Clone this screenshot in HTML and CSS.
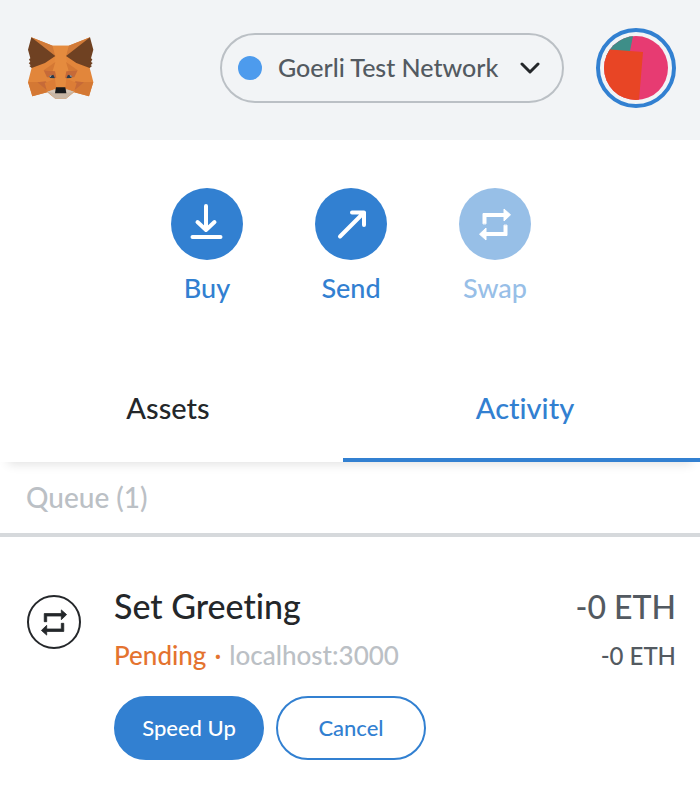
FILE: index.html
```html
<!DOCTYPE html>
<html lang="en">
<head>
<meta charset="utf-8">
<meta name="viewport" content="width=device-width, initial-scale=1">
<title>MetaMask</title>
<link rel="stylesheet" href="styles.css">
</head>
<body>
<svg class="defs" aria-hidden="true">
  <symbol id="swap" viewBox="0 0 32 33">
    <g fill="currentColor" stroke="currentColor" stroke-width="1" stroke-linejoin="round">
      <path d="M4 15.500V5.500H25V1L31.500 6.800L25 13V8.500H7V15.500Z"/>
      <path d="M28 17.500V27.500H7V32L.5 26.200L7 20V24.500H25V17.500Z"/>
    </g>
  </symbol>
</svg>
<header class="topbar">
  <svg class="fox" viewBox="54 50 198 186" role="img" aria-label="MetaMask">
    <path fill="#e2863b" d="M64 51L128 76H176L240 51L239 142L250 185L237 228L192 216L168 235H136L112 216L67 228L54 185L65 142Z"/>
    <path fill="#d17a38" d="M64 51L128 76L136 107ZM240 51L176 76L168 107Z"/>
    <path fill="#e58b3e" d="M128 76H176L168 107L176 151L169 200H135L128 151L136 107Z"/>
    <path fill="#6f4122" d="M64 51L136 107L105 128L65 143L58 137L62 135L56 128L61 125L57 117L61 114L54 88ZM240 51L168 107L199 128L239 143L246 137L242 135L248 128L243 125L247 117L243 114L250 88Z"/>
    <path fill="#d47834" d="M54 185H82L104 188L111 216L67 228ZM250 185H222L200 188L193 216L237 228ZM136 125L101 150L128 151ZM168 125L203 150L176 151Z"/>
    <path fill="#c66a38" d="M101 150L135 153L139 173L111 171ZM203 150L169 153L165 173L193 171ZM82 186L107 183L118 194L111 210ZM222 186L197 183L186 194L193 210Z"/>
    <path fill="#dc7d36" d="M104 188L135 175L138 202L112 216ZM200 188L169 175L166 202L192 216Z"/>
    <path fill="#c7b6a5" d="M112 214L135 207H169L192 214L168 235H136Z"/>
    <path fill="#d3c4b6" d="M112 214L135 207V218ZM192 214L169 207V218Z"/>
    <path fill="#16191c" d="M138 201H166L169 219H135Z"/>
    <path fill="#293b4c" d="M117 168L130 163L135 174L121 173ZM187 168L174 163L169 174L183 173Z"/>
    <path fill="#a8b2b5" d="M117 168L125 164L122 170ZM187 168L179 164L182 170Z"/>
  </svg>
  <label class="network">
    <span class="network-dot"></span>
    <select aria-label="Network"><option>Goerli Test Network</option></select>
    <svg class="chevron" viewBox="0 0 20 12" aria-hidden="true"><path d="M2 2L10 10L18 2"/></svg>
  </label>
  <button class="account" aria-label="Account">
    <svg viewBox="0 0 64 64" aria-hidden="true">
      <defs><clipPath id="round"><circle cx="32" cy="32" r="32"/></clipPath></defs>
      <g clip-path="url(#round)">
        <path fill="#e73b72" d="M0 0H64V64H0Z"/>
        <path fill="#3e8e88" d="M0 0H29L25 20H0Z"/>
        <path fill="#e84525" d="M0 13L39 16L35 64H0Z"/>
      </g>
    </svg>
  </button>
</header>
<main>
  <div class="actions">
    <button class="action">
      <span class="action-circle"><svg viewBox="0 0 36 36" aria-hidden="true"><path d="M17 0V24M8.500 16L17 24L25.500 16M3.500 31H31.500"/></svg></span>
      Buy
    </button>
    <button class="action">
      <span class="action-circle"><svg viewBox="0 0 36 36" aria-hidden="true"><path d="M7 30.500L31 6.500M19 6.500H31V19"/></svg></span>
      Send
    </button>
    <button class="action" disabled>
      <span class="action-circle"><svg class="swap-icon" aria-hidden="true"><use href="#swap"/></svg></span>
      Swap
    </button>
  </div>
  <div class="tabs" role="tablist">
    <button class="tab" role="tab" aria-selected="false">Assets</button>
    <button class="tab" role="tab" aria-selected="true">Activity</button>
  </div>
  <section>
    <h2 class="queue">Queue (1)</h2>
    <article class="item">
      <span class="item-icon"><svg aria-hidden="true"><use href="#swap"/></svg></span>
      <div class="details">
        <div class="line">
          <h3 class="primary">Set Greeting</h3>
          <span class="primary amount">-0 ETH</span>
        </div>
        <div class="line">
          <p class="secondary"><span class="pending">Pending</span><span class="dot">·</span><span class="origin">localhost:3000</span></p>
          <span class="secondary amount">-0 ETH</span>
        </div>
        <div class="buttons">
          <button class="pill filled">Speed Up</button>
          <button class="pill">Cancel</button>
        </div>
      </div>
    </article>
  </section>
</main>
</body>
</html>
```
FILE: styles.css
```css
* { box-sizing: border-box; }

body {
  margin: 0;
  background: #fff;
  color: #24272a;
  font-family: Lato, "Liberation Sans", sans-serif;
  font-weight: 500;
  font-variant-ligatures: none;
}

button, select {
  border: 0;
  padding: 0;
  background: none;
  color: inherit;
  font: inherit;
  font-variant-ligatures: none;
}

button { cursor: pointer; }
h2, h3, p { margin: 0; font-weight: 500; }
svg { display: block; }
.defs { display: none; }

.topbar {
  display: flex;
  align-items: center;
  gap: 32px;
  height: 140px;
  padding: 0 24px 4px 28px;
  background: #f2f4f6;
}

.fox { width: 66px; height: 62px; }

.network {
  display: flex;
  align-items: center;
  width: 344px;
  height: 70px;
  margin-left: auto;
  padding: 0 22px 0 16px;
  border: 2px solid #bbc0c5;
  border-radius: 35px;
  color: #535a61;
}

.network-dot {
  width: 24px;
  height: 24px;
  margin-right: 16px;
  border-radius: 50%;
  background: #4d9bed;
}

.network select {
  flex: 1;
  min-width: 0;
  padding-bottom: 2px;
  appearance: none;
  font-size: 25px;
  line-height: 36px;
}

.chevron {
  width: 20px;
  height: 12px;
  fill: none;
  stroke: #24272a;
  stroke-width: 3;
  stroke-linecap: round;
  stroke-linejoin: round;
}

.account {
  width: 80px;
  height: 80px;
  padding: 4px;
  border: 4px solid #3280d1;
  border-radius: 50%;
}

.actions {
  display: flex;
  justify-content: center;
  gap: 72px;
  padding: 48px 0 68px 2px;
}

.action {
  display: flex;
  flex-direction: column;
  align-items: center;
  gap: 10px;
  width: 72px;
  color: #3280d1;
  font-size: 27px;
  line-height: 36px;
}

.action:disabled { opacity: 0.5; }

.action-circle {
  display: grid;
  place-items: center;
  width: 72px;
  height: 72px;
  border-radius: 50%;
  background: #3280d1;
  color: #fff;
}

.action-circle svg {
  width: 36px;
  height: 36px;
  overflow: visible;
  fill: none;
  stroke: #fff;
  stroke-width: 4;
  stroke-linecap: round;
  stroke-linejoin: round;
}

.action-circle .swap-icon { width: 32px; height: 33px; stroke: none; }

.tabs {
  display: grid;
  grid-template-columns: 49fr 51fr;
  box-shadow: 0 10px 10px -8px rgba(0, 0, 0, 0.12);
}

.tab {
  height: 88px;
  padding: 0 7px 20px 0;
  font-size: 29px;
  line-height: 36px;
}

.tab[aria-selected="true"] {
  padding: 0 0 16px 7px;
  border-bottom: 4px solid #3280d1;
  color: #3280d1;
}

.queue {
  padding: 17px 26px 18px;
  border-bottom: 4px solid #d6d9dc;
  color: #bbc0c5;
  font-size: 28px;
  line-height: 36px;
}

.item {
  display: flex;
  gap: 33px;
  padding: 47px 24px 48px 27px;
}

.item-icon {
  display: grid;
  place-items: center;
  width: 54px;
  height: 54px;
  margin-top: 11px;
  border: 2px solid #24272a;
  border-radius: 50%;
}

.item-icon svg { width: 26px; height: 27px; }

.details { flex: 1; }

.line {
  display: flex;
  align-items: baseline;
  justify-content: space-between;
}

.primary { font-size: 34px; line-height: 44px; }
.secondary { font-size: 26px; line-height: 36px; padding-top: 8px; }
.amount { color: #535a61; }
.primary.amount { font-size: 32px; }
.secondary.amount { font-size: 24px; }
.pending, .dot { color: #e4732f; }
.dot { margin: 0 8px; }
.origin { color: #bbc0c5; }

.buttons {
  display: flex;
  gap: 12px;
  margin-top: 22px;
}

.pill {
  width: 150px;
  height: 64px;
  padding-bottom: 2px;
  border: 2px solid #3280d1;
  border-radius: 32px;
  color: #3280d1;
  font-size: 22px;
}

.filled { background: #3280d1; color: #fff; }
```
